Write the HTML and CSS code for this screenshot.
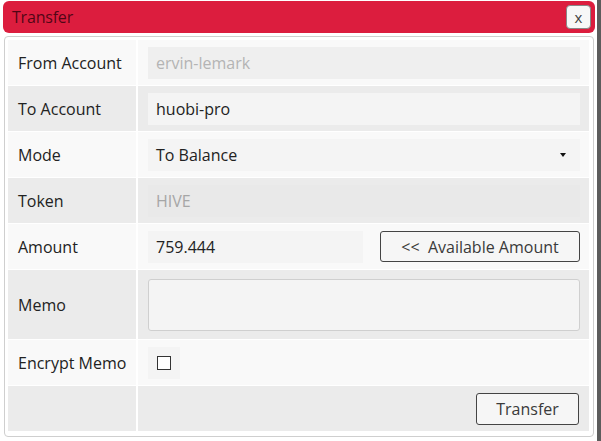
FILE: index.html
```html
<!DOCTYPE html>
<html lang="en">
<head>
    <meta charset="UTF-8">
    <title>Transfer</title>
    <link rel="stylesheet" href="styles.css">
</head>
<body>
    <div class="window">
        <div class="titlebar">
            <span class="title">Transfer</span>
            <button class="close">x</button>
        </div>

        <div class="panel">
            <div class="row light">
                <div class="label">From Account</div>
                <div class="value"><input class="field disabled" value="ervin-lemark" disabled></div>
            </div>
            <div class="row dark">
                <div class="label">To Account</div>
                <div class="value"><input class="field" value="huobi-pro"></div>
            </div>
            <div class="row light">
                <div class="label">Mode</div>
                <div class="value">
                    <div class="field select">
                        <span>To Balance</span>
                        <span class="arrow"></span>
                    </div>
                </div>
            </div>
            <div class="row dark">
                <div class="label">Token</div>
                <div class="value"><input class="field disabled token" value="HIVE" disabled></div>
            </div>
            <div class="row light">
                <div class="label">Amount</div>
                <div class="value amount">
                    <input class="field" value="759.444">
                    <button class="btn avail">&lt;&lt;&nbsp; Available Amount</button>
                </div>
            </div>
            <div class="row dark memo">
                <div class="label">Memo</div>
                <div class="value"><textarea class="memo-box"></textarea></div>
            </div>
            <div class="row light">
                <div class="label">Encrypt Memo</div>
                <div class="value"><span class="check-wrap"><span class="check"></span></span></div>
            </div>
            <div class="row dark">
                <div class="label"></div>
                <div class="value actions"><button class="btn send">Transfer</button></div>
            </div>
        </div>
    </div>
</body>
</html>
```

FILE: styles.css
```css
body {
    margin: 0;
    background: #fff;
    font-family: "Open Sans", "Noto Sans", sans-serif;
    color: #222;
}
.window {
    width: 601px;
    height: 441px;
    box-sizing: border-box;
    padding: 1px 2px 0 3px;
    border-right: 4px solid #5c5c5c;
    background: #fff;
}
.titlebar {
    height: 32px;
    background: #dc1d3e;
    border-radius: 6px;
    display: flex;
    align-items: center;
    justify-content: space-between;
    padding: 0 4px 0 9px;
}
.title {
    font-size: 16px;
    color: rgba(40, 0, 10, 0.78);
    letter-spacing: -0.2px;
}
.close {
    width: 25px;
    height: 24px;
    padding: 0;
    background: #f7f7f7;
    border: 1px solid #888;
    border-radius: 4px;
    font-family: "Open Sans", sans-serif;
    font-size: 15px;
    line-height: 20px;
    color: #444;
}
.panel {
    margin: 3px 1px 0 1px;
    height: 401px;
    box-sizing: border-box;
    border: 1px solid #cfcfcf;
    border-radius: 4px;
    padding: 3px 4px 4px 3px;
    display: flex;
    flex-direction: column;
    gap: 1px;
}
.row {
    display: grid;
    grid-template-columns: 128px 1fr;
    column-gap: 2px;
    height: 45px;
}
.row.memo { height: 69px; }
.light .label, .light .value { background: #f9f9f9; }
.dark .label, .dark .value { background: #ebebeb; }
.label {
    display: flex;
    align-items: center;
    padding-left: 10px;
    font-size: 16px;
}
.value {
    display: flex;
    align-items: center;
    padding: 0 9px 0 10px;
}
.field {
    box-sizing: border-box;
    width: 100%;
    height: 32px;
    border: none;
    background: #f4f4f4;
    padding: 0 8px;
    font-family: "Open Sans", sans-serif;
    font-size: 16px;
    color: #222;
    outline: none;
}
.field.disabled {
    background: #efefef;
    color: #b4b4b4;
}
.field.token {
    background: #e9e9e9;
    color: #a6a6a6;
}
.select {
    display: flex;
    align-items: center;
    justify-content: space-between;
    padding-right: 14px;
}
.arrow {
    width: 0;
    height: 0;
    border-left: 3px solid transparent;
    border-right: 3px solid transparent;
    border-top: 4px solid #111;
}
.amount { gap: 17px; }
.amount .field { width: 215px; flex: none; }
.btn {
    height: 32px;
    box-sizing: border-box;
    background: #f6f6f6;
    border: 1px solid #444;
    border-radius: 3px;
    font-family: "Open Sans", sans-serif;
    font-size: 16px;
    color: #3a3a3a;
}
.avail { flex: 1; height: 31px; }
.memo-box {
    box-sizing: border-box;
    width: 100%;
    height: 52px;
    background: #f4f4f4;
    border: 1px solid #cfcfcf;
    border-radius: 3px;
    resize: none;
    outline: none;
}
.check-wrap {
    background: #f4f4f4;
    padding: 9px;
    display: flex;
}
.check {
    width: 12px;
    height: 12px;
    border: 1.5px solid #333;
    background: #fff;
}
.actions { justify-content: flex-end; padding-right: 10px; }
.send { width: 103px; }
```
